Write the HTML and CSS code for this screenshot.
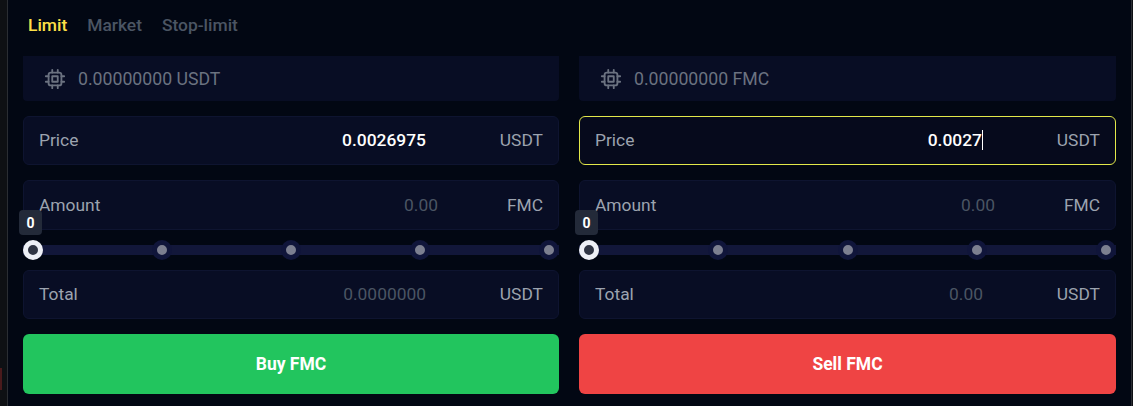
FILE: index.html
```html
<!DOCTYPE html>
<html lang="en">
<head>
<meta charset="utf-8">
<title>Trade form</title>
<link rel="stylesheet" href="styles.css">
</head>
<body>
<div class="side"></div>
<main class="panel">
  <nav class="tabs">
    <span class="tab active">Limit</span>
    <span class="tab">Market</span>
    <span class="tab">Stop-limit</span>
  </nav>
  <div class="columns">
    <section class="col">
      <div class="balance">
        <svg class="chip" viewBox="0 0 24 24" fill="none" stroke="currentColor" stroke-width="2" stroke-linecap="round" stroke-linejoin="round"><rect x="5" y="5" width="14" height="14" rx="2.5"/><rect x="9" y="9" width="6" height="6"/><path d="M9 2v3M15 2v3M9 19v3M15 19v3M2 9h3M2 15h3M19 9h3M19 15h3"/></svg>
        <span>0.00000000 USDT</span>
      </div>
      <div class="field price"><span class="label">Price</span><span class="value filled">0.0026975</span><span class="unit">USDT</span></div>
      <div class="field amount"><span class="label">Amount</span><span class="value">0.00</span><span class="unit unit-fmc">FMC</span></div>
      <div class="slider">
        <span class="bubble">0</span>
        <span class="knob"></span><span class="dot"></span><span class="dot"></span><span class="dot"></span><span class="dot"></span>
      </div>
      <div class="field total"><span class="label">Total</span><span class="value">0.0000000</span><span class="unit">USDT</span></div>
      <button class="btn buy">Buy FMC</button>
    </section>
    <section class="col">
      <div class="balance">
        <svg class="chip" viewBox="0 0 24 24" fill="none" stroke="currentColor" stroke-width="2" stroke-linecap="round" stroke-linejoin="round"><rect x="5" y="5" width="14" height="14" rx="2.5"/><rect x="9" y="9" width="6" height="6"/><path d="M9 2v3M15 2v3M9 19v3M15 19v3M2 9h3M2 15h3M19 9h3M19 15h3"/></svg>
        <span>0.00000000 FMC</span>
      </div>
      <div class="field price focus"><span class="label">Price</span><span class="value filled caret">0.0027</span><span class="unit">USDT</span></div>
      <div class="field amount"><span class="label">Amount</span><span class="value">0.00</span><span class="unit unit-fmc">FMC</span></div>
      <div class="slider">
        <span class="bubble">0</span>
        <span class="knob"></span><span class="dot"></span><span class="dot"></span><span class="dot"></span><span class="dot"></span>
      </div>
      <div class="field total"><span class="label">Total</span><span class="value">0.00</span><span class="unit">USDT</span></div>
      <button class="btn sell">Sell FMC</button>
    </section>
  </div>
</main>
</body>
</html>
```
FILE: styles.css
```css
* { box-sizing: border-box; }
html, body { margin: 0; height: 100%; }
body {
  display: flex;
  background: #0e1014;
  font-family: Roboto, "Liberation Sans", sans-serif;
  overflow: hidden;
}
.side {
  width: 7px;
  flex: none;
  background: linear-gradient(#4a1a1c, #4a1a1c) no-repeat 0 368px / 2px 22px;
}
.panel {
  width: 1125px;
  flex: none;
  background: #020713;
  border-left: 1px solid #2a2d33;
  border-right: 1px solid #2a2d33;
  padding: 0 15px;
}
.tabs {
  display: flex;
  gap: 20px;
  height: 56px;
  padding: 15px 0 0 5px;
  font-size: 17.4px;
  line-height: 21px;
  font-weight: 500;
}
.tab { color: #4b5563; }
.tab.active { color: #fde047; }
.columns { display: flex; gap: 20px; }
.col { width: 537px; display: flex; flex-direction: column; }
.col:first-child { width: 536px; }
.balance {
  display: flex;
  align-items: center;
  gap: 12px;
  height: 45px;
  padding: 0 21px;
  background: #080d24;
  border-radius: 0 0 4px 4px;
  color: #6b7280;
  font-size: 17.7px;
  margin-bottom: 15px;
}
.chip { width: 22px; height: 22px; flex: none; }
.field {
  display: flex;
  align-items: center;
  padding: 0 15px;
  background: #080d24;
  border: 1px solid #0e1430;
  border-radius: 6px;
  font-size: 17.4px;
}
.price { height: 49px; margin-bottom: 15px; padding-bottom: 2px; }
.amount { height: 50px; }
.total { height: 49px; margin-bottom: 15px; padding-bottom: 2px; }
.field.focus { border-color: #e2e84a; background: #060a1c; }
.label { color: #9ca3af; flex: 1; }
.value { color: #4b5563; }
.value.filled { color: #fff; font-weight: 500; }
.unit { color: #9ca3af; width: 117px; text-align: right; flex: none; }
.unit-fmc { width: 105px; }
.caret { border-right: 1px solid #fff; }
.slider {
  position: relative;
  display: flex;
  justify-content: space-between;
  align-items: center;
  height: 40px;
  background: linear-gradient(#12173a, #12173a) no-repeat 0 50% / 100% 10px;
}
.dot {
  width: 20px;
  height: 20px;
  border-radius: 50%;
  background: #7c7f90;
  border: 5px solid #10153a;
}
.knob {
  width: 20px;
  height: 20px;
  border-radius: 50%;
  background: #303544;
  border: 5px solid #eef0f6;
}
.bubble {
  position: absolute;
  left: -4px;
  top: -20px;
  width: 23px;
  height: 25px;
  border-radius: 4px;
  background: #232a39;
  color: #fff;
  font-size: 14px;
  font-weight: 700;
  display: flex;
  align-items: center;
  justify-content: center;
}
.btn {
  height: 60px;
  border: 0;
  border-radius: 6px;
  font: 700 17.5px Roboto, "Liberation Sans", sans-serif;
  color: #fff;
}
.buy { background: #22c55e; }
.sell { background: #ef4444; }
```
